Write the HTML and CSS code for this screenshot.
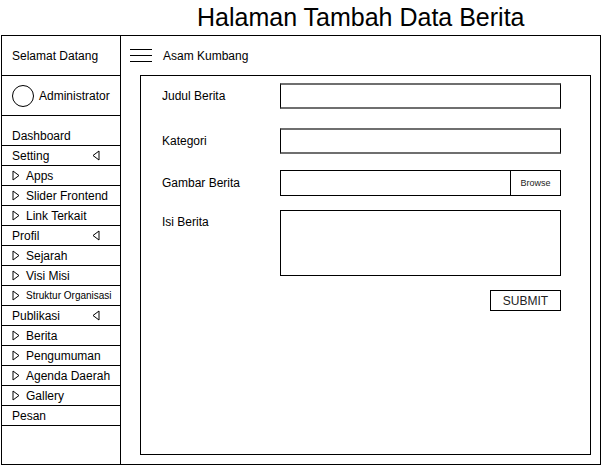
FILE: index.html
```html
<!DOCTYPE html>
<html>
<head>
<meta charset="utf-8">
<link rel="stylesheet" href="styles.css">
</head>
<body>
<div class="title">Halaman Tambah Data Berita</div>
<div class="frame">
  <aside class="sidebar">
    <div class="brand">Selamat Datang</div>
    <div class="user"><span class="avatar"></span>Administrator</div>
    <div class="dash">Dashboard</div>
    <div class="row head">Setting<svg class="collapse" width="8" height="11" viewBox="0 0 8 11"><polygon points="7,1 1,5.5 7,10" /></svg></div>
    <div class="row sub"><svg class="tri" width="8" height="11" viewBox="0 0 8 11"><polygon points="1,1 7,5.5 1,10" /></svg>Apps</div>
    <div class="row sub"><svg class="tri" width="8" height="11" viewBox="0 0 8 11"><polygon points="1,1 7,5.5 1,10" /></svg>Slider Frontend</div>
    <div class="row sub"><svg class="tri" width="8" height="11" viewBox="0 0 8 11"><polygon points="1,1 7,5.5 1,10" /></svg>Link Terkait</div>
    <div class="row head">Profil<svg class="collapse" width="8" height="11" viewBox="0 0 8 11"><polygon points="7,1 1,5.5 7,10" /></svg></div>
    <div class="row sub"><svg class="tri" width="8" height="11" viewBox="0 0 8 11"><polygon points="1,1 7,5.5 1,10" /></svg>Sejarah</div>
    <div class="row sub"><svg class="tri" width="8" height="11" viewBox="0 0 8 11"><polygon points="1,1 7,5.5 1,10" /></svg>Visi Misi</div>
    <div class="row sub small"><svg class="tri" width="8" height="11" viewBox="0 0 8 11"><polygon points="1,1 7,5.5 1,10" /></svg>Struktur Organisasi</div>
    <div class="row head">Publikasi<svg class="collapse" width="8" height="11" viewBox="0 0 8 11"><polygon points="7,1 1,5.5 7,10" /></svg></div>
    <div class="row sub"><svg class="tri" width="8" height="11" viewBox="0 0 8 11"><polygon points="1,1 7,5.5 1,10" /></svg>Berita</div>
    <div class="row sub"><svg class="tri" width="8" height="11" viewBox="0 0 8 11"><polygon points="1,1 7,5.5 1,10" /></svg>Pengumuman</div>
    <div class="row sub"><svg class="tri" width="8" height="11" viewBox="0 0 8 11"><polygon points="1,1 7,5.5 1,10" /></svg>Agenda Daerah</div>
    <div class="row sub"><svg class="tri" width="8" height="11" viewBox="0 0 8 11"><polygon points="1,1 7,5.5 1,10" /></svg>Gallery</div>
    <div class="row head">Pesan</div>
  </aside>
  <main class="main">
    <header class="topbar">
      <svg class="burger" width="22" height="13" viewBox="0 0 22 13"><path d="M0 0.5H22M0 6.5H22M0 12.5H22" /></svg>
      <span>Asam Kumbang</span>
    </header>
    <section class="card">
      <div class="field f1"><label>Judul Berita</label><div class="input"></div></div>
      <div class="field f2"><label>Kategori</label><div class="input"></div></div>
      <div class="field f3"><label>Gambar Berita</label><div class="file"><div class="file-name"></div><div class="browse">Browse</div></div></div>
      <div class="field f4 top"><label>Isi Berita</label><div class="textarea"></div></div>
      <div class="actions"><div class="submit">SUBMIT</div></div>
    </section>
  </main>
</div>
</body>
</html>
```

FILE: styles.css
```css
* { box-sizing: border-box; }
html, body { margin: 0; padding: 0; background: #fff; }
body {
  font-family: "Liberation Sans", Arial, sans-serif;
  font-size: 12px;
  color: #000;
  width: 603px;
  height: 467px;
  overflow: hidden;
}
.title {
  height: 35px;
  padding-left: 197px;
  font-size: 25px;
  line-height: 35px;
  white-space: nowrap;
}
.frame {
  margin-left: 1px;
  width: 600px;
  height: 430px;
  border: 1px solid #000;
  display: grid;
  grid-template-columns: 119px 1fr;
}
.sidebar {
  border-right: 1px solid #000;
  display: flex;
  flex-direction: column;
}
.brand {
  height: 40px;
  border-bottom: 1px solid #000;
  padding-left: 10px;
  display: flex;
  align-items: center;
}
.user {
  height: 40px;
  border-bottom: 1px solid #000;
  padding-left: 10px;
  display: flex;
  align-items: center;
  gap: 5px;
}
.avatar {
  width: 22px;
  height: 22px;
  border: 1px solid #000;
  border-radius: 50%;
}
.dash {
  height: 30px;
  border-bottom: 1px solid #000;
  padding-left: 10px;
  padding-top: 12px;
  line-height: 16px;
}
.row {
  height: 20px;
  border-bottom: 1px solid #000;
  display: flex;
  align-items: center;
  padding-left: 10px;
  white-space: nowrap;
}
.row.head { padding-right: 20px; }
.collapse { margin-left: auto; }
.row svg polygon { fill: none; stroke: #000; stroke-width: 1; }
.tri { margin-right: 6px; flex: none; }
.row.small { font-size: 10px; }
.main {
  display: flex;
  flex-direction: column;
  padding: 0 9px 9px 19px;
}
.topbar {
  height: 39px;
  display: flex;
  align-items: center;
  margin-left: -10px;
  gap: 11px;
}
.burger path { stroke: #000; stroke-width: 1; fill: none; }
.card {
  flex: 1;
  border: 1px solid #000;
  padding: 7px 29px 0 21px;
  display: flex;
  flex-direction: column;
}
.field {
  display: grid;
  grid-template-columns: 118px 1fr;
  align-items: center;
}
.field.top { align-items: start; }
.field.top label { padding-top: 5px; }
.f2 { margin-top: 19px; }
.f3 { margin-top: 16px; }
.f4 { margin-top: 14px; }
.input {
  height: 26px;
  border-left: 1px solid #000;
  border-right: 1px solid #000;
  border-top: 2px solid #6f6f6f;
  border-bottom: 2px solid #6f6f6f;
}
.file {
  height: 26px;
  border: 1px solid #000;
  display: flex;
}
.file-name { flex: 1; }
.browse {
  width: 50px;
  border-left: 1px solid #000;
  font-size: 9px;
  display: flex;
  align-items: center;
  justify-content: center;
  color: #222;
}
.textarea {
  height: 66px;
  border: 1px solid #000;
}
.actions {
  margin-top: 14px;
  display: flex;
  justify-content: flex-end;
}
.submit {
  width: 71px;
  height: 21px;
  border: 1px solid #000;
  display: flex;
  align-items: center;
  justify-content: center;
  color: #222;
}
```
